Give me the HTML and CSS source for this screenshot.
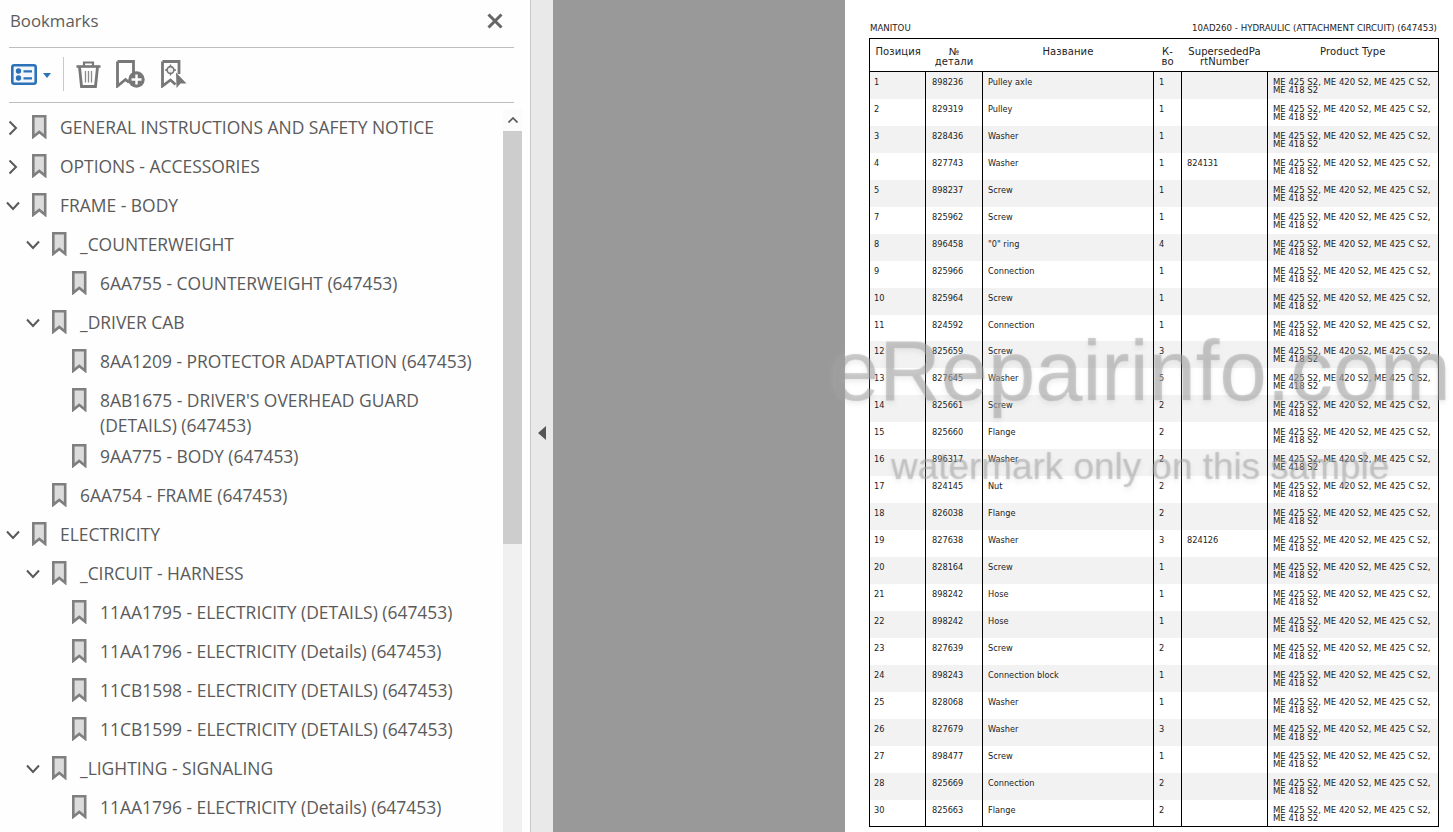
FILE: index.html
```html
<!DOCTYPE html>
<html lang="en">
<head>
<meta charset="utf-8">
<title>Bookmarks</title>
<link rel="stylesheet" href="styles.css">
</head>
<body>
<svg class="defs" width="0" height="0" aria-hidden="true">
  <symbol id="bm" viewBox="0 0 15 24"><path d="M1.3 1.3H13.200V21.800L7.250 17 1.300 21.800Z" fill="#dcdcdc" stroke="#7f7f7f" stroke-width="2.6" stroke-linejoin="miter"/></symbol>
  <symbol id="cr" viewBox="0 0 10 16"><path d="M1.5 1.5 8 8 1.5 14.5" fill="none" stroke="#5a5a5a" stroke-width="2"/></symbol>
  <symbol id="cd" viewBox="0 0 14 10"><path d="M1 1.5 7 8 13 1.5" fill="none" stroke="#5a5a5a" stroke-width="2"/></symbol>
</svg>
<div class="app">
  <aside class="sidebar">
    <header class="side-head">
      <span class="side-title">Bookmarks</span>
      <svg class="close" viewBox="0 0 16 16"><path d="M1.5 1.5 14.5 14.5M14.5 1.5 1.5 14.5" stroke="#666" stroke-width="3" fill="none"/></svg>
    </header>
    <div class="toolbar">
      <svg class="ic-list" viewBox="0 0 26 21"><rect x="1.300" y="1.300" width="23.400" height="18.400" rx="2" fill="#f3f7fc" stroke="#2c72b8" stroke-width="2.600"/><circle cx="7.500" cy="7" r="2.700" fill="#2c72b8"/><circle cx="7.500" cy="14" r="2.700" fill="#2c72b8"/><path d="M12.500 7.300H21M12.500 14.300H21" stroke="#2c72b8" stroke-width="2.200"/></svg>
      <svg class="ic-caret" viewBox="0 0 8 5"><path d="M0 0H8L4 5Z" fill="#2c72b8"/></svg>
      <span class="tool-div"></span>
      <svg class="ic-trash" viewBox="0 0 25 27"><path d="M.5 5.500H24.500" fill="none" stroke="#777" stroke-width="2.600"/><path d="M8 5V1.500H17V5" fill="none" stroke="#777" stroke-width="2.200"/><path d="M3.500 6 5.500 25.500H19.500L21.500 6" fill="none" stroke="#777" stroke-width="2.800"/><path d="M9.500 10V21.500M12.500 10V21.500M15.500 10V21.500" stroke="#8a8a8a" stroke-width="1.300"/></svg>
      <svg class="ic-add" viewBox="0 0 29 28"><path d="M1.500 1.500H17.500V13M1.500 1.500V26L9.500 19.500 13 22.500" fill="none" stroke="#777" stroke-width="2.800"/><circle cx="20.500" cy="19.500" r="8.200" fill="#777"/><path d="M15.500 19.500H25.500M20.500 14.500V24.500" stroke="#fff" stroke-width="2.400"/></svg>
      <svg class="ic-target" viewBox="0 0 26 28"><path d="M1.500 1.500H18V14M1.500 1.500V26L9.500 20 14.500 24.500" fill="none" stroke="#777" stroke-width="2.800"/><circle cx="9.500" cy="10" r="3.400" fill="#eee" stroke="#777" stroke-width="1.600"/><path d="M9.500 4.500V6.500M9.500 13.500V15.500M4 10H6M13 10H15" stroke="#777" stroke-width="1.400"/><path d="M15 12.500 25.500 23.500H19.500L15.500 28Z" fill="#777"/></svg>
    </div>
    <div class="tree-wrap">
      <ul class="tree">
        <li class="node l0"><svg class="chev-r"><use href="#cr"/></svg><svg class="bm"><use href="#bm"/></svg><span class="label">GENERAL INSTRUCTIONS AND SAFETY NOTICE</span></li>
        <li class="node l0"><svg class="chev-r"><use href="#cr"/></svg><svg class="bm"><use href="#bm"/></svg><span class="label">OPTIONS - ACCESSORIES</span></li>
        <li class="node l0"><svg class="chev-d"><use href="#cd"/></svg><svg class="bm"><use href="#bm"/></svg><span class="label">FRAME - BODY</span></li>
        <li class="node l1"><svg class="chev-d"><use href="#cd"/></svg><svg class="bm"><use href="#bm"/></svg><span class="label">_COUNTERWEIGHT</span></li>
        <li class="node l2"><span class="chev-gap"></span><svg class="bm"><use href="#bm"/></svg><span class="label">6AA755 - COUNTERWEIGHT (647453)</span></li>
        <li class="node l1"><svg class="chev-d"><use href="#cd"/></svg><svg class="bm"><use href="#bm"/></svg><span class="label">_DRIVER CAB</span></li>
        <li class="node l2"><span class="chev-gap"></span><svg class="bm"><use href="#bm"/></svg><span class="label">8AA1209 - PROTECTOR ADAPTATION (647453)</span></li>
        <li class="node l2 two"><span class="chev-gap"></span><svg class="bm"><use href="#bm"/></svg><span class="label">8AB1675 - DRIVER'S OVERHEAD GUARD<br>(DETAILS) (647453)</span></li>
        <li class="node l2"><span class="chev-gap"></span><svg class="bm"><use href="#bm"/></svg><span class="label">9AA775 - BODY (647453)</span></li>
        <li class="node l1"><span class="chev-gap"></span><svg class="bm"><use href="#bm"/></svg><span class="label">6AA754 - FRAME (647453)</span></li>
        <li class="node l0"><svg class="chev-d"><use href="#cd"/></svg><svg class="bm"><use href="#bm"/></svg><span class="label">ELECTRICITY</span></li>
        <li class="node l1"><svg class="chev-d"><use href="#cd"/></svg><svg class="bm"><use href="#bm"/></svg><span class="label">_CIRCUIT - HARNESS</span></li>
        <li class="node l2"><span class="chev-gap"></span><svg class="bm"><use href="#bm"/></svg><span class="label">11AA1795 - ELECTRICITY (DETAILS) (647453)</span></li>
        <li class="node l2"><span class="chev-gap"></span><svg class="bm"><use href="#bm"/></svg><span class="label">11AA1796 - ELECTRICITY (Details) (647453)</span></li>
        <li class="node l2"><span class="chev-gap"></span><svg class="bm"><use href="#bm"/></svg><span class="label">11CB1598 - ELECTRICITY (DETAILS) (647453)</span></li>
        <li class="node l2"><span class="chev-gap"></span><svg class="bm"><use href="#bm"/></svg><span class="label">11CB1599 - ELECTRICITY (DETAILS) (647453)</span></li>
        <li class="node l1"><svg class="chev-d"><use href="#cd"/></svg><svg class="bm"><use href="#bm"/></svg><span class="label">_LIGHTING - SIGNALING</span></li>
        <li class="node l2"><span class="chev-gap"></span><svg class="bm"><use href="#bm"/></svg><span class="label">11AA1796 - ELECTRICITY (Details) (647453)</span></li>
      </ul>
      <div class="scrollbar">
        <div class="sb-up"><svg viewBox="0 0 10 6"><path d="M.5 5.500 5 1 9.500 5.500" fill="none" stroke="#555" stroke-width="1.600"/></svg></div>
        <div class="sb-thumb"></div>
      </div>
    </div>
  </aside>
  <div class="splitter"><svg class="split-arrow" viewBox="0 0 8 14"><path d="M8 0V14L0 7Z" fill="#555"/></svg></div>
  <div class="gutter"></div>
  <main class="page">
    <div class="page-head"><span>MANITOU</span><span>10AD260 - HYDRAULIC (ATTACHMENT CIRCUIT) (647453)</span></div>
    <table class="parts">
      <colgroup><col class="c1"><col class="c2"><col class="c3"><col class="c4"><col class="c5"><col class="c6"></colgroup>
      <thead><tr><th>Позиция</th><th>№<br>детали</th><th>Название</th><th>К-<br>во</th><th>SupersededPa<br>rtNumber</th><th>Product Type</th></tr></thead>
      <tbody>
        <tr><td>1</td><td>898236</td><td>Pulley axle</td><td>1</td><td></td><td>ME 425 S2, ME 420 S2, ME 425 C S2, ME 418 S2</td></tr>
        <tr><td>2</td><td>829319</td><td>Pulley</td><td>1</td><td></td><td>ME 425 S2, ME 420 S2, ME 425 C S2, ME 418 S2</td></tr>
        <tr><td>3</td><td>828436</td><td>Washer</td><td>1</td><td></td><td>ME 425 S2, ME 420 S2, ME 425 C S2, ME 418 S2</td></tr>
        <tr><td>4</td><td>827743</td><td>Washer</td><td>1</td><td>824131</td><td>ME 425 S2, ME 420 S2, ME 425 C S2, ME 418 S2</td></tr>
        <tr><td>5</td><td>898237</td><td>Screw</td><td>1</td><td></td><td>ME 425 S2, ME 420 S2, ME 425 C S2, ME 418 S2</td></tr>
        <tr><td>7</td><td>825962</td><td>Screw</td><td>1</td><td></td><td>ME 425 S2, ME 420 S2, ME 425 C S2, ME 418 S2</td></tr>
        <tr><td>8</td><td>896458</td><td>"0" ring</td><td>4</td><td></td><td>ME 425 S2, ME 420 S2, ME 425 C S2, ME 418 S2</td></tr>
        <tr><td>9</td><td>825966</td><td>Connection</td><td>1</td><td></td><td>ME 425 S2, ME 420 S2, ME 425 C S2, ME 418 S2</td></tr>
        <tr><td>10</td><td>825964</td><td>Screw</td><td>1</td><td></td><td>ME 425 S2, ME 420 S2, ME 425 C S2, ME 418 S2</td></tr>
        <tr><td>11</td><td>824592</td><td>Connection</td><td>1</td><td></td><td>ME 425 S2, ME 420 S2, ME 425 C S2, ME 418 S2</td></tr>
        <tr><td>12</td><td>825659</td><td>Screw</td><td>3</td><td></td><td>ME 425 S2, ME 420 S2, ME 425 C S2, ME 418 S2</td></tr>
        <tr><td>13</td><td>827645</td><td>Washer</td><td>5</td><td></td><td>ME 425 S2, ME 420 S2, ME 425 C S2, ME 418 S2</td></tr>
        <tr><td>14</td><td>825661</td><td>Screw</td><td>2</td><td></td><td>ME 425 S2, ME 420 S2, ME 425 C S2, ME 418 S2</td></tr>
        <tr><td>15</td><td>825660</td><td>Flange</td><td>2</td><td></td><td>ME 425 S2, ME 420 S2, ME 425 C S2, ME 418 S2</td></tr>
        <tr><td>16</td><td>896317</td><td>Washer</td><td>2</td><td></td><td>ME 425 S2, ME 420 S2, ME 425 C S2, ME 418 S2</td></tr>
        <tr><td>17</td><td>824145</td><td>Nut</td><td>2</td><td></td><td>ME 425 S2, ME 420 S2, ME 425 C S2, ME 418 S2</td></tr>
        <tr><td>18</td><td>826038</td><td>Flange</td><td>2</td><td></td><td>ME 425 S2, ME 420 S2, ME 425 C S2, ME 418 S2</td></tr>
        <tr><td>19</td><td>827638</td><td>Washer</td><td>3</td><td>824126</td><td>ME 425 S2, ME 420 S2, ME 425 C S2, ME 418 S2</td></tr>
        <tr><td>20</td><td>828164</td><td>Screw</td><td>1</td><td></td><td>ME 425 S2, ME 420 S2, ME 425 C S2, ME 418 S2</td></tr>
        <tr><td>21</td><td>898242</td><td>Hose</td><td>1</td><td></td><td>ME 425 S2, ME 420 S2, ME 425 C S2, ME 418 S2</td></tr>
        <tr><td>22</td><td>898242</td><td>Hose</td><td>1</td><td></td><td>ME 425 S2, ME 420 S2, ME 425 C S2, ME 418 S2</td></tr>
        <tr><td>23</td><td>827639</td><td>Screw</td><td>2</td><td></td><td>ME 425 S2, ME 420 S2, ME 425 C S2, ME 418 S2</td></tr>
        <tr><td>24</td><td>898243</td><td>Connection block</td><td>1</td><td></td><td>ME 425 S2, ME 420 S2, ME 425 C S2, ME 418 S2</td></tr>
        <tr><td>25</td><td>828068</td><td>Washer</td><td>1</td><td></td><td>ME 425 S2, ME 420 S2, ME 425 C S2, ME 418 S2</td></tr>
        <tr><td>26</td><td>827679</td><td>Washer</td><td>3</td><td></td><td>ME 425 S2, ME 420 S2, ME 425 C S2, ME 418 S2</td></tr>
        <tr><td>27</td><td>898477</td><td>Screw</td><td>1</td><td></td><td>ME 425 S2, ME 420 S2, ME 425 C S2, ME 418 S2</td></tr>
        <tr><td>28</td><td>825669</td><td>Connection</td><td>2</td><td></td><td>ME 425 S2, ME 420 S2, ME 425 C S2, ME 418 S2</td></tr>
        <tr><td>30</td><td>825663</td><td>Flange</td><td>2</td><td></td><td>ME 425 S2, ME 420 S2, ME 425 C S2, ME 418 S2</td></tr>
      </tbody>
    </table>
  </main>
</div>
<div class="wm wm-big">eRepairinfo.com</div>
<div class="wm wm-small">watermark only on this sample</div>
</body>
</html>
```
FILE: styles.css
```css
* { box-sizing: border-box; }
html, body { margin: 0; height: 832px; overflow: hidden; }
body { font-family: "Open Sans", "Liberation Sans", sans-serif; background: #fff; position: relative; }
.defs { position: absolute; }
.app { display: flex; height: 832px; }

.sidebar { width: 531px; flex: none; background: #fefefe; border-right: 1px solid #c9c9c9; display: flex; flex-direction: column; color: #555; }
.side-head { height: 48px; margin: 0 16px 0 9px; border-bottom: 1px solid #bdbdbd; display: flex; align-items: center; justify-content: space-between; padding: 0 11px 6px 1px; flex: none; }
.side-title { font-size: 16.8px; color: #5c5c5c; }
.close { width: 16px; height: 16px; }
.toolbar { height: 55px; margin: 0 16px 0 9px; border-bottom: 1px solid #bdbdbd; display: flex; align-items: center; padding: 0 0 2px 2px; flex: none; }
.ic-list { width: 26px; height: 21px; }
.ic-caret { width: 8px; height: 5px; margin-left: 6px; margin-top: 2px; }
.tool-div { width: 1px; height: 34px; background: #c9c9c9; margin-left: 12px; }
.ic-trash { width: 25px; height: 27px; margin-left: 12px; }
.ic-add { width: 29px; height: 28px; margin-left: 15px; }
.ic-target { width: 26px; height: 28px; margin-left: 16px; }

.tree-wrap { flex: 1; display: flex; min-height: 0; padding-right: 8px; }
.tree { flex: 1; list-style: none; margin: 0; padding: 5px 0 0; overflow: hidden; }
.node { display: flex; height: 39px; padding-top: 7px; line-height: 25px; font-size: 17.45px; align-items: flex-start; padding-left: 8px; white-space: nowrap; }
.node.two { height: 56px; }
.l1 { padding-left: 28px; }
.l2 { padding-left: 48px; }
.chev-r { width: 10px; height: 16px; margin-top: 5px; flex: none; }
.chev-d { width: 14px; height: 10px; margin: 8px -2px 0 -2px; flex: none; }
.chev-gap { width: 10px; flex: none; }
.bm { width: 15px; height: 24px; margin: 0 0 0 14px; flex: none; }
.label { margin-left: 13px; color: #5a5a5a; }

.scrollbar { width: 19px; flex: none; margin-top: 6px; background: #f0f0f0; display: flex; flex-direction: column; }
.sb-up { height: 22px; background: #fbfbfb; display: flex; align-items: center; justify-content: center; }
.sb-up svg { width: 10px; height: 6px; }
.sb-thumb { height: 413px; background: #cdcdcd; }

.splitter { width: 22px; flex: none; background: #e9e9e9; display: flex; align-items: center; justify-content: center; }
.split-arrow { width: 8px; height: 14px; margin-top: 34px; }
.gutter { width: 292px; flex: none; background: #999; }

.page { flex: 1; background: #fff; padding: 22px 16px 0 24px; font-family: "DejaVu Sans", Verdana, sans-serif; color: #222; }
.page-head { display: flex; justify-content: space-between; padding: 1px 2px 0 1px; font-size: 8.65px; line-height: 10px; height: 16px; }
.parts { width: 569px; table-layout: fixed; border-collapse: collapse; border: 1px solid #000; font-size: 8.2px; line-height: 8px; }
.c1 { width: 56px; } .c2 { width: 57px; } .c3 { width: 171px; } .c4 { width: 28px; } .c5 { width: 86px; } .c6 { width: 171px; }
.parts th { height: 33px; font-weight: normal; font-size: 10px; letter-spacing: .1px; line-height: 10px; vertical-align: top; padding: 8px 3px 0 4px; border-bottom: 1px solid #000; word-break: break-all; color: #222; }
.parts th + th { text-align: center; padding: 8px 3px 0; }
.parts td { height: 27px; vertical-align: top; padding: 6px 5px 0; border-left: 1px solid #000; }
.parts td:first-child { border-left: 0; padding-left: 4px; }
.parts td:nth-child(2) { padding-left: 6px; }
.parts td:last-child { font-size: 8.5px; padding-left: 5px; padding-right: 2px; }
.parts tbody tr:nth-child(10) td { height: 26px; }
.parts tbody tr:nth-child(odd) { background: #f2f2f2; }

.wm { position: absolute; font-family: "Liberation Sans", Arial, sans-serif; color: rgba(200,200,200,.25); text-shadow: 0 0 1px rgba(110,110,110,.35), 0 3px 5px rgba(140,140,140,.16), 0 0 8px rgba(255,255,255,.25); white-space: nowrap; pointer-events: none; }
.wm-big { left: 832px; top: 321px; font-size: 85px; line-height: 100px; }
.wm-small { left: 891px; top: 447px; font-size: 36.9px; line-height: 40px; }
```
